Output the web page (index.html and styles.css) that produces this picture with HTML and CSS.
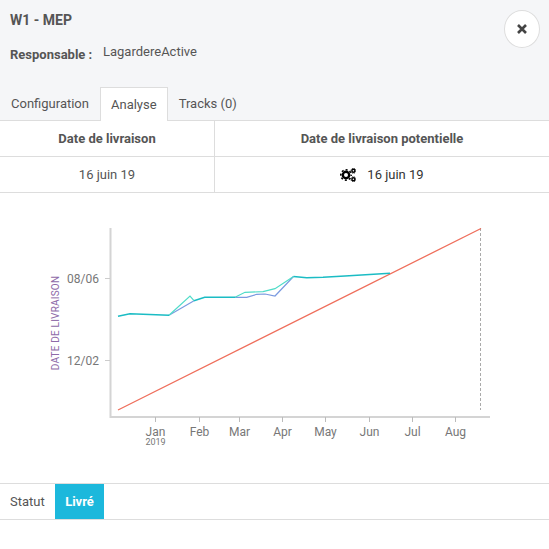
FILE: index.html
```html
<!DOCTYPE html>
<html>
  <head>
    <title>W1 - MEP</title>
    <link rel="stylesheet" href="styles.css">
  </head>
  <body>
    <!-- Header with title, owner and tabs -->
    <header class="header">
      <h1 class="title">W1 - MEP</h1>
      <div class="owner">
        <span class="owner-label">Responsable :</span>
        <span class="owner-name">LagardereActive</span>
      </div>
      <button class="close-button">
        <svg width="10" height="10" viewBox="0 0 10 10">
          <path d="M1 1L9 9M9 1L1 9" stroke="#444" stroke-width="2.6" fill="none"/>
        </svg>
      </button>
      <nav class="tabs">
        <a class="tab">Configuration</a>
        <a class="tab tab-active">Analyse</a>
        <a class="tab">Tracks (0)</a>
      </nav>
    </header>

    <!-- Dates table -->
    <div class="dates">
      <div class="cell cell-head cell-left">Date de livraison</div>
      <div class="cell cell-head">Date de livraison potentielle</div>
      <div class="cell cell-left">16 juin 19</div>
      <div class="cell cell-potential">
        <svg class="cogs" width="16" height="14" viewBox="0 0 16 14">
          <circle cx="6" cy="7" r="3.2" fill="none" stroke="#000" stroke-width="2.4"/>
          <circle cx="6" cy="7" r="5.2" fill="none" stroke="#000" stroke-width="1.6" stroke-dasharray="2 2.08" stroke-dashoffset="1"/>
          <circle cx="13.4" cy="2.8" r="1.5" fill="none" stroke="#000" stroke-width="1.4"/>
          <circle cx="13.4" cy="2.8" r="2.5" fill="none" stroke="#000" stroke-width="0.8" stroke-dasharray="1.2 0.76"/>
          <circle cx="13.4" cy="11.2" r="1.5" fill="none" stroke="#000" stroke-width="1.4"/>
          <circle cx="13.4" cy="11.2" r="2.5" fill="none" stroke="#000" stroke-width="0.8" stroke-dasharray="1.2 0.76"/>
        </svg>
        <span>16 juin 19</span>
      </div>
    </div>

    <!-- Chart, drawn in page coordinates -->
    <div class="chart">
      <svg class="chart-svg" width="549" height="290" viewBox="0 193 549 290">
        <path class="axis" d="M110.5 228V417H490"/>
        <path class="tick" d="M105 278.5H110M105 360.5H110"/>
        <path class="tick-x" d="M155.5 417V422M199.5 417V422M239.5 417V422M282.5 417V422M325.5 417V422M369.5 417V422M412.5 417V422M455.5 417V422"/>
        <path class="marker" d="M480.5 228V410"/>
        <polyline class="line-red" points="118,410 481,228.5"/>
        <polyline class="line-blue" points="169,315.3 194,300.7"/>
        <polyline class="line-blue" points="235,297.3 246.7,297.3 256.7,294.3 265,294 275,296 293.5,276.5"/>
        <polyline class="line-green" points="169,315.3 190,296 194,300.7"/>
        <polyline class="line-green" points="235,297.3 245,292.3 263,291.7 275,288.7 293.5,276.5"/>
        <polyline class="line-both" points="118,316.3 130,313.7 169,315.3"/>
        <polyline class="line-both" points="194,300.7 204.7,297.3 235,297.3"/>
        <polyline class="line-both" points="293.5,276.5 306.7,277.7 323,277.3 345,276 390,273.3"/>
        <text class="y-title" transform="translate(59 323) rotate(-90)">DATE DE LIVRAISON</text>
        <text class="label label-y" x="99" y="283">08/06</text>
        <text class="label label-y" x="99" y="365">12/02</text>
        <text class="label label-x" x="155.5" y="436">Jan</text>
        <text class="label-year" x="155.5" y="445">2019</text>
        <text class="label label-x" x="199.5" y="436">Feb</text>
        <text class="label label-x" x="239.5" y="436">Mar</text>
        <text class="label label-x" x="282.5" y="436">Apr</text>
        <text class="label label-x" x="325.5" y="436">May</text>
        <text class="label label-x" x="369.5" y="436">Jun</text>
        <text class="label label-x" x="412.5" y="436">Jul</text>
        <text class="label label-x" x="455.5" y="436">Aug</text>
      </svg>
    </div>

    <!-- Status row -->
    <div class="status">
      <span class="status-label">Statut</span>
      <span class="status-value">Livré</span>
    </div>
  </body>
</html>
```

FILE: styles.css
```css
body {
  margin: 0;
  font-family: Roboto, sans-serif;
  font-size: 13px;
  color: #555;
  background-color: #fff;
}

.header {
  position: relative;
  height: 120px;
  background-color: #f5f6f8;
  border-bottom: 1px solid #ddd;
  display: flex;
  flex-direction: column;
}

.title {
  margin: 0;
  padding: 12px 0 0 10px;
  font-size: 14px;
  line-height: 17px;
  font-weight: 700;
  color: #555;
}

.owner {
  display: flex;
  padding: 14px 0 0 10px;
}

.owner-label {
  font-weight: 700;
  font-size: 13px;
  line-height: 17px;
  margin-top: 3px;
  width: 93px;
}

.owner-name {
  font-size: 13px;
  line-height: 17px;
}

.close-button {
  position: absolute;
  top: 10px;
  right: 9px;
  width: 36px;
  height: 38px;
  padding: 0;
  border: 1px solid #ddd;
  border-radius: 50%;
  background-color: #fff;
  display: flex;
  align-items: center;
  justify-content: center;
}

.tabs {
  display: flex;
  margin-top: auto;
  height: 33px;
}

.tab {
  display: flex;
  align-items: center;
  padding: 0 10px 1px;
  border: 1px solid transparent;
  border-bottom: none;
  line-height: 17px;
}

.tab-active {
  height: 34px;
  background-color: #fff;
  border-color: #ddd;
  box-sizing: border-box;
}

.dates {
  display: grid;
  grid-template-columns: 215px 1fr;
  grid-auto-rows: 36px;
}

.cell {
  display: flex;
  align-items: center;
  justify-content: center;
  border-bottom: 1px solid #ddd;
}

.cell-left {
  border-right: 1px solid #ddd;
}

.cell-head {
  font-weight: 700;
}

.cell-potential {
  color: #333;
  gap: 11px;
}

.chart {
  height: 290px;
}

.chart-svg {
  display: block;
}

.axis {
  fill: none;
  stroke: #d4d4d4;
  stroke-width: 2;
}

.tick {
  fill: none;
  stroke: #ccc;
  stroke-width: 1;
}

.tick-x {
  fill: none;
  stroke: #bbb;
  stroke-width: 1;
}

.marker {
  fill: none;
  stroke: #aaa;
  stroke-width: 1;
  stroke-dasharray: 3 2;
}

.line-red {
  fill: none;
  stroke: #ef6f5c;
  stroke-width: 1.3;
}

.line-blue {
  fill: none;
  stroke: #7a9ae0;
  stroke-width: 1.2;
}

.line-green {
  fill: none;
  stroke: #4fdcc8;
  stroke-width: 1.2;
}

.line-both {
  fill: none;
  stroke: #1bbcc4;
  stroke-width: 1.5;
}

.y-title {
  font-size: 10px;
  letter-spacing: 0.2px;
  fill: #8e6aa8;
  text-anchor: middle;
}

.label {
  font-size: 12px;
  fill: #777;
}

.label-y {
  text-anchor: end;
}

.label-x {
  text-anchor: middle;
}

.label-year {
  font-size: 9px;
  fill: #777;
  text-anchor: middle;
}

.status {
  display: flex;
  height: 35px;
  border-top: 1px solid #ddd;
  border-bottom: 1px solid #ddd;
  align-items: stretch;
}

.status-label {
  display: flex;
  align-items: center;
  width: 45px;
  padding-left: 10px;
}

.status-value {
  display: flex;
  align-items: center;
  justify-content: center;
  width: 49px;
  background-color: #1cb8dc;
  color: #fff;
  font-weight: 700;
}
```
